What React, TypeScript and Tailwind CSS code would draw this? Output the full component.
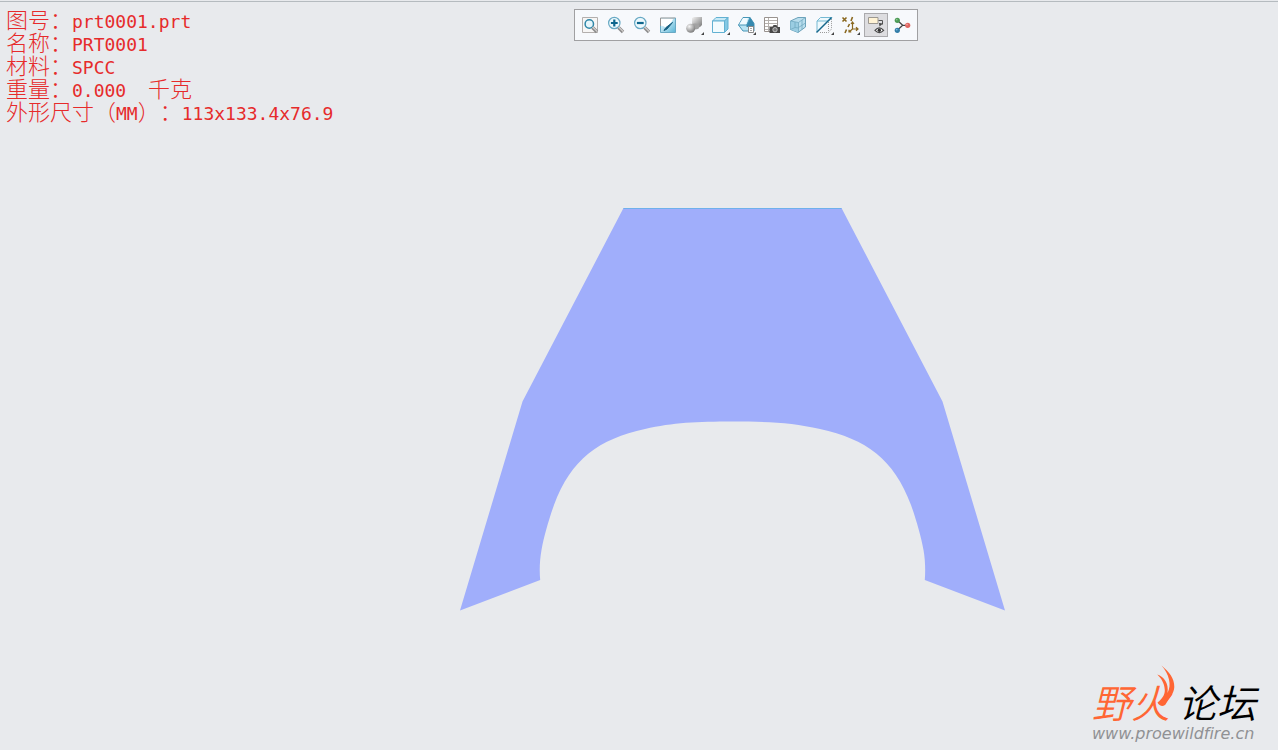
import type { ReactNode } from "react";

const partInfo = [
  { label: "图号：", value: "prt0001.prt" },
  { label: "名称：", value: "PRT0001" },
  { label: "材料：", value: "SPCC" },
];

const Arrow = () => <path d="M22 19v3h-3z" fill="#444" />;

const Handle = () => (
  <>
    <path d="M14.5 14.5l4.5 4.5" stroke="#8d8d8d" strokeWidth="3.4" />
    <path d="M14.5 13.8l4.8 4.8" stroke="#d8d5d2" strokeWidth="1.2" />
  </>
);

const tools: { name: string; active?: boolean; icon: ReactNode }[] = [
  {
    name: "重新调整",
    icon: (
      <>
        <path d="M4.5 4.5h15v15h-15z" fill="#f7f6f5" stroke="#b3afad" />
        <circle cx="11.3" cy="11" r="4.2" fill="#e6f6fb" stroke="#2f87a8" strokeWidth="1.5" />
        <Handle />
      </>
    ),
  },
  {
    name: "放大",
    icon: (
      <>
        <circle cx="10.3" cy="10" r="5.7" fill="#edf9fd" stroke="#68a9c4" strokeWidth="1.2" />
        <path d="M10.3 6.6v6.8M6.9 10h6.8" stroke="#0d668d" strokeWidth="2.2" />
        <Handle />
      </>
    ),
  },
  {
    name: "缩小",
    icon: (
      <>
        <circle cx="10.3" cy="10" r="5.7" fill="#edf9fd" stroke="#68a9c4" strokeWidth="1.2" />
        <path d="M6.9 10h6.8" stroke="#0d668d" strokeWidth="2.2" />
        <Handle />
      </>
    ),
  },
  {
    name: "重画",
    icon: (
      <>
        <path d="M4.5 4.5h15v15h-15z" fill="url(#paint)" />
        <path d="M5 6h12C16 9.5 13 12 10 15Q8 12.5 5 12.5z" fill="#fff" />
        <path d="M4.5 13V5h15" fill="none" stroke="#9a9694" />
        <path d="M4.5 13v6.5h15V5" fill="none" stroke="#69a9c4" />
        <path d="M16.5 9.5l-5.5 6.5-3 1.5 2-3z" fill="#185f80" stroke="#185f80" />
      </>
    ),
  },
  {
    name: "渲染选项",
    icon: (
      <>
        <path d="M10 5l2-1h8v8l-2 2h-8z" fill="url(#metal)" />
        <ellipse cx="13" cy="13.5" rx="4.5" ry="3" fill="#a2a2a2" />
        <circle cx="8.7" cy="15.3" r="4.5" fill="url(#ball)" />
        <Arrow />
      </>
    ),
  },
  {
    name: "显示样式",
    icon: (
      <>
        <path d="M4.5 8l3.5-3.5h12L16.5 8z" fill="#c6e9f6" stroke="#62b1d2" />
        <path d="M16.5 8L20 4.5V16l-3.5 3.5z" fill="#84c9e4" stroke="#62b1d2" />
        <path d="M4.5 8h12v11.5h-12z" fill="#f2fbfe" stroke="#62b1d2" />
        <Arrow />
      </>
    ),
  },
  {
    name: "已保存方向",
    icon: (
      <>
        <path d="M4.5 12L9 4.5h7l4 6V18H9z" fill="#b9e3f2" stroke="#4796b7" />
        <path d="M5 12L9 5h5l-2 7z" fill="#f1fbff" />
        <path d="M12.5 12L16 4.5l4 6V14h-7.5z" fill="#3689af" />
        <path d="M4.5 12H13L16 4.5" fill="none" stroke="#4796b7" />
        <path d="M14.5 13.5h5v6h-5z" fill="#fff" stroke="#898989" />
        <path d="M16 15.5h2M16 17.5h2" stroke="#aaa" />
        <Arrow />
      </>
    ),
  },
  {
    name: "视图管理器",
    icon: (
      <>
        <path d="M4.5 4.5h13v14h-13z" fill="#fff" />
        <path d="M4.5 7.5h13M4.5 10.5h13M4.5 13.5h13M4.5 16.5h13M8.5 4.5v14" stroke="#b5b1ae" />
        <path d="M4.5 4.5h13v14h-13z" stroke="#99938f" />
        <path d="M9.5 14h3l1-2h3l1 2H20v6H9.5z" fill="#484848" />
        <circle cx="15" cy="16.7" r="2.2" fill="#777" stroke="#d2d2d2" strokeWidth=".8" />
      </>
    ),
  },
  {
    name: "透视图",
    icon: (
      <>
        <path d="M4.5 8L12 4.5h7.5V14L12 19.5l-7.5-3z" fill="#b9deed" stroke="#6ca2ba" />
        <path d="M4.5 8l8 1.5v10L4.5 16.5z" fill="#9acde2" />
        <path d="M9 9v5.5l3.5.5M9 14.5L4.5 16.5M4.5 8l8 1.5 7-5M12.5 9.5v10M16 7v9.5M12.5 14.5l7-4.5" fill="none" stroke="#72a9c1" strokeWidth=".8" />
      </>
    ),
  },
  {
    name: "截面",
    icon: (
      <>
        <path d="M5 19V8l3.5-3.5H20L5 19z" fill="#eef9fd" stroke="#75b9d3" />
        <path d="M5 8h11.5L20 4.5" fill="none" stroke="#75b9d3" />
        <path d="M8 19.5h8.5l3-3.5V6M16.5 9v10" fill="none" stroke="#9a9a9a" strokeDasharray="1 1" />
        <path d="M4.5 19.5l15-15" stroke="#16678b" strokeWidth="1.5" />
        <Arrow />
      </>
    ),
  },
  {
    name: "基准显示过滤器",
    icon: (
      <>
        <path d="M4.5 4.5l4 4M8.5 4.5l-4 4M14.5 4L13 8M11.5 11L10 14M8.5 16.5L7 20" stroke="#8a681f" strokeWidth="1.6" />
        <path d="M14.5 9.5V16h5M14.5 16L11 19M13 11l1.5-2 1.5 2M18 14.3l2 1.7-2 1.7M11 16.7V19h2.3" fill="none" stroke="#8a681f" strokeWidth="1.2" />
        <Arrow />
      </>
    ),
  },
  {
    name: "注释显示",
    active: true,
    icon: (
      <>
        <path d="M4.5 4.5H14v6H4.5z" fill="#fff3d5" stroke="#9c9891" />
        <path d="M14.5 7.5h4v4" fill="none" stroke="#555" />
        <path d="M15 10l4 .5-3.5 3z" fill="#444" />
        <path d="M11 17.3q4.3-5 8.6 0-4.3 4.5-8.6 0z" fill="#fff" stroke="#474747" strokeWidth="1.2" />
        <circle cx="15.3" cy="17.3" r="1.7" fill="#333" />
      </>
    ),
  },
  {
    name: "旋转中心",
    icon: (
      <>
        <path d="M7.3 7.3l5.4 5h5M12.7 12.3l-5.4 5" fill="none" stroke="#444" strokeWidth="1.2" />
        <circle cx="7.3" cy="7.3" r="2.6" fill="#4c9a55" />
        <circle cx="17.7" cy="12.3" r="2.6" fill="#df6662" />
        <circle cx="7.3" cy="17.3" r="2.6" fill="#327da8" />
        <circle cx="6.7" cy="6.6" r=".9" fill="#8cc48f" />
        <circle cx="17" cy="11.6" r=".9" fill="#f3a29f" />
        <circle cx="6.7" cy="16.6" r=".9" fill="#7db9da" />
      </>
    ),
  },
];

const Toolbar = () => (
  <div role="toolbar" className="flex gap-0.5 border border-[#a0a0a2] bg-[#f7f9fc] p-[3px]">
    {tools.map((tool) => (
      <button
        key={tool.name}
        type="button"
        aria-label={tool.name}
        aria-pressed={tool.active}
        className={tool.active ? "h-6 w-6 bg-[#dddde0] outline outline-1 -outline-offset-1 outline-[#aaaaad]" : "h-6 w-6 hover:bg-gray-200"}
      >
        <svg viewBox="0 0 24 24" className="h-6 w-6" fill="none">
          {tool.icon}
        </svg>
      </button>
    ))}
  </div>
);

const Gradients = () => (
  <svg width="0" height="0" className="absolute" aria-hidden="true">
    <defs>
      <linearGradient id="paint" x1="0" y1="0" x2="1" y2="1">
        <stop offset=".3" stopColor="#d3eef8" />
        <stop offset="1" stopColor="#57b4d6" />
      </linearGradient>
      <linearGradient id="metal" x1="0" y1="0" x2="1" y2="1">
        <stop offset="0" stopColor="#f4f4f4" />
        <stop offset="1" stopColor="#777" />
      </linearGradient>
      <radialGradient id="ball" cx=".35" cy=".3" r=".75">
        <stop offset="0" stopColor="#f4f4f4" />
        <stop offset="1" stopColor="#777" />
      </radialGradient>
    </defs>
  </svg>
);

const Label = ({ children }: { children: ReactNode }) => (
  <span className="font-['Liberation_Sans','Noto_Sans_CJK_SC',sans-serif] text-[22px] font-light [text-spacing-trim:space-all]">
    {children}
  </span>
);

const App = () => {
  return (
    <div className="flex min-h-screen flex-col bg-[#e8eaed] pt-px">
      <Gradients />
      <header className="flex items-start border-t border-[#b5bbbf] pr-[360px]">
        {/* Part parameters */}
        <div className="flex-1 whitespace-pre pt-2 pl-1.5 font-['DejaVu_Sans_Mono',monospace] text-[18px] leading-[22px] text-[#e62b2b]">
          {partInfo.map((row) => (
            <p key={row.label} className="flex items-baseline">
              <Label>{row.label}</Label>
              <span>{row.value}</span>
            </p>
          ))}
          <p className="flex items-baseline">
            <Label>重量：</Label>
            <span>{"0.000  "}</span>
            <Label>千克</Label>
          </p>
          <p className="flex items-baseline">
            <Label>外形尺寸（</Label>
            <span>MM</span>
            <Label>）：</Label>
            <span>113x133.4x76.9</span>
          </p>
        </div>
        <div className="pt-[7px]">
          <Toolbar />
        </div>
      </header>

      {/* Model view */}
      <main className="flex flex-1 justify-center pt-[82px] pl-[188px]">
        <svg viewBox="460 207 546 404" className="h-[404px] w-[546px]" role="img" aria-label="PRT0001">
          <path
            d="M623.5 208H841.5L942.5 401.5L1005 610.5L924.8 580C925.5 571 925.3 560 923.5 550C921 536 916 519 911 505C894 459 866 439 820 429C792 422.5 768 421.5 732.5 421.5C697 421.5 673 422.5 645 429C599 439 571 459 554 505C549 519 544 536 541.5 550C539.7 560 539.3 571 540.2 580L460 610.5L522.5 401.5Z"
            fill="#a0aefb"
          />
          <path d="M623.5 208.5h218" stroke="#6fb0ec" />
        </svg>
      </main>

      <footer className="flex justify-end pr-[22px] pb-1.5">
        <a href="#" className="flex flex-col">
          <span className="relative flex gap-2 font-['Liberation_Sans','Noto_Sans_CJK_SC',sans-serif] text-[39px] leading-[38px] font-[350] italic">
            <span className="text-[#ff6634]">野火</span>
            <span className="text-black">论坛</span>
            <svg viewBox="0 0 20 42" className="absolute -top-[21px] left-16 h-[42px] w-5" aria-hidden="true">
              <path
                d="M5.5 .5C13 7 18.5 13 18.3 22C18 29 13 33 9.5 39.5C7.5 42 3 41 1.5 37.5C6 34 9 30 8.8 25C8.5 18 5 13 1.3 9.5C8 12 13 18 11.5 28C16 20 13 9 5.5 .5Z"
                fill="#ff6634"
              />
            </svg>
          </span>
          <span className="font-['DejaVu_Sans',sans-serif] text-base leading-5 text-[#909194] italic [font-variant-ligatures:none]">
            www.proewildfire.cn
          </span>
        </a>
      </footer>
    </div>
  );
};

export default App;
